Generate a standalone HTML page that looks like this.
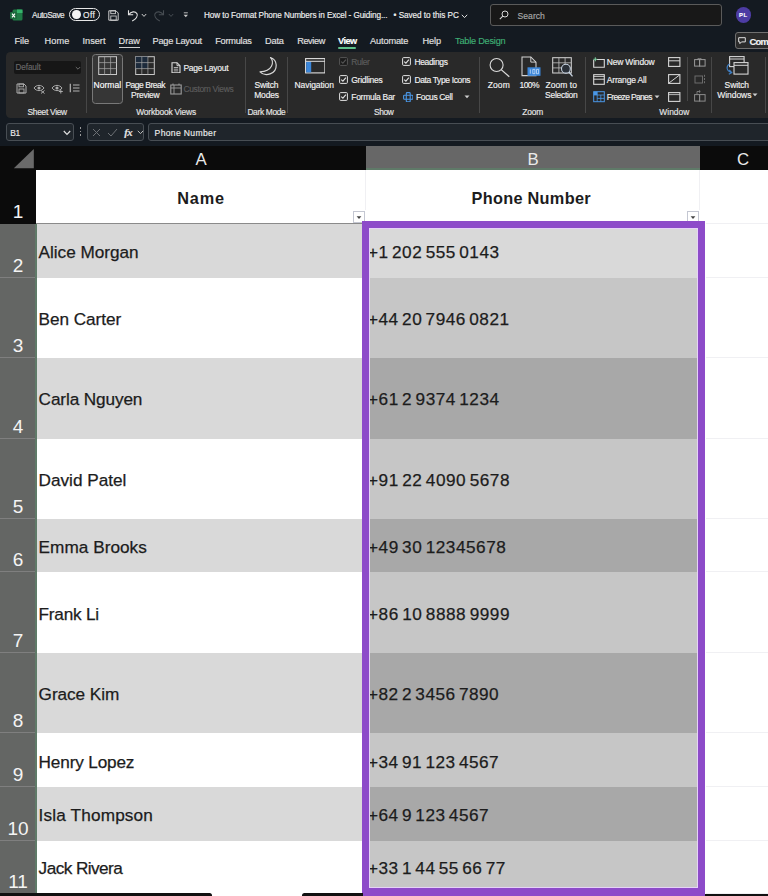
<!DOCTYPE html>
<html><head><meta charset="utf-8">
<style>
*{margin:0;padding:0;box-sizing:border-box}
html,body{width:768px;height:896px;overflow:hidden;background:#141a21;font-family:"Liberation Sans",sans-serif;}
.a{position:absolute}
.t{position:absolute;white-space:nowrap;color:#e8e8e8;font-size:8.6px;line-height:10px;letter-spacing:-0.1px;-webkit-text-stroke:0.15px currentColor}
.c{text-align:center}
.dim{color:#6f6f6f}
#sheet .cell{position:absolute;white-space:nowrap;color:#1c1c1c;font-size:17.2px;line-height:20px;-webkit-text-stroke:0.25px #1c1c1c}
#sheet .cell.hd{font-weight:bold;text-align:center;font-size:16.3px;letter-spacing:0.35px;-webkit-text-stroke:0}
#sheet .rn{position:absolute;color:#f4f4f4;font-size:19px;line-height:22px;width:36px;text-align:center;left:0}
#sheet .colh{color:#eaeaea;font-size:16.8px;line-height:20px;text-align:center}
</style></head><body>
<div class="a" style="left:0px;top:0px;width:768px;height:51px;background:#141a21;"></div>
<svg class="a" style="left:10px;top:9px;" width="13" height="12" viewBox="0 0 13 12"><rect x="2.5" y="0.5" width="10" height="11" rx="1.5" fill="#1f7a45"/><rect x="7" y="0.5" width="5.500" height="3.500" fill="#35b36b"/><rect x="0" y="3" width="7" height="7" rx="1" fill="#1a6a3c"/><path d="M2 4.600 L5 8.400 M5 4.600 L2 8.400" stroke="#fff" stroke-width="1.100"/></svg>
<div class="a" style="left:69px;top:7.800px;width:30.500px;height:13.200px;border:1.100px solid #e8e8e8;border-radius:7px"></div>
<div class="a" style="left:71.800px;top:10px;width:8.800px;height:8.800px;border-radius:50%;background:#f2f2f2"></div>
<svg class="a" style="left:108px;top:9.7px;" width="11" height="11" viewBox="0 0 11 11"><path d="M0.800 0.800 H8 L10.200 3 V10.200 H0.800 Z" fill="none" stroke="#d6d6d6" stroke-width="0.950"/><rect x="2.800" y="0.800" width="4.600" height="2.900" fill="none" stroke="#d6d6d6" stroke-width="0.850"/><rect x="2.800" y="6" width="5.400" height="4.200" fill="none" stroke="#d6d6d6" stroke-width="0.850"/></svg>
<svg class="a" style="left:127px;top:9px;" width="12" height="13" viewBox="0 0 12 13"><path d="M1.500 1.200 V5.800 H6.200" fill="none" stroke="#e4e4e4" stroke-width="1.100"/><path d="M1.800 5.600 C4 2.300 8.200 2 9.900 4.600 C11.400 7.200 9 10 5.200 12" fill="none" stroke="#e4e4e4" stroke-width="1.100"/></svg>
<svg class="a" style="left:141px;top:13px;" width="6" height="5" viewBox="0 0 6 5"><path d="M0.800 1 L3 3.400 L5.200 1" fill="none" stroke="#cfcfcf" stroke-width="1"/></svg>
<svg class="a" style="left:153px;top:9px;" width="12" height="13" viewBox="0 0 12 13"><path d="M10.500 1.200 V5.800 H5.800" fill="none" stroke="#474d53" stroke-width="1.100"/><path d="M10.200 5.600 C8 2.300 3.800 2 2.100 4.600 C0.600 7.200 3 10 6.800 12" fill="none" stroke="#474d53" stroke-width="1.100"/></svg>
<svg class="a" style="left:168px;top:13px;" width="6" height="5" viewBox="0 0 6 5"><path d="M0.800 1 L3 3.400 L5.200 1" fill="none" stroke="#474d53" stroke-width="1"/></svg>
<svg class="a" style="left:182.5px;top:11.5px;" width="6" height="7" viewBox="0 0 6 7"><path d="M0.800 0.800 H4.800" stroke="#c8c8c8" stroke-width="0.900"/><path d="M0.600 2.800 L2.800 5.200 L5 2.800 Z" fill="#c8c8c8"/></svg>
<svg class="a" style="left:461px;top:13.5px;" width="7" height="5" viewBox="0 0 7 5"><path d="M0.800 0.800 L3.500 3.600 L6.200 0.800" fill="none" stroke="#e0e0e0" stroke-width="1"/></svg>
<div class="a" style="left:490px;top:4px;width:231.500px;height:21.500px;background:#181818;border:1px solid #5a5a5a;border-radius:3px"></div>
<svg class="a" style="left:499px;top:9.5px;" width="10" height="10" viewBox="0 0 10 10"><circle cx="6" cy="4" r="3" fill="none" stroke="#d8d8d8" stroke-width="1"/><path d="M3.800 6.200 L0.800 9.200" stroke="#d8d8d8" stroke-width="1.100"/></svg>
<div class="a" style="left:735.500px;top:7.300px;width:15.500px;height:15.500px;border-radius:50%;background:#4d3ca3"></div>
<div class="a" style="left:119px;top:47.2px;width:20.5px;height:1px;background:#d0d0d0;"></div>
<div class="a" style="left:338.4px;top:46.9px;width:18px;height:2px;background:#5fc08a;border-radius:1px"></div>
<div class="a" style="left:734.700px;top:32.300px;width:40px;height:16.400px;background:#2b2b2b;border:1px solid #707070;border-radius:3px"></div>
<svg class="a" style="left:738.3px;top:37px;" width="8" height="7.5" viewBox="0 0 8 7.5"><path d="M0.700 0.700 H7.300 V4.900 H3.500 L1.900 6.600 V4.900 H0.700 Z" fill="none" stroke="#e0e0e0" stroke-width="1"/></svg>
<div class="a" style="left:5.500px;top:51.500px;width:780px;height:66.500px;background:#292929;border-radius:4.500px"></div>
<div class="a" style="left:86.2px;top:57px;width:1px;height:56px;background:#474747;"></div>
<div class="a" style="left:245.0px;top:57px;width:1px;height:56px;background:#474747;"></div>
<div class="a" style="left:287.2px;top:57px;width:1px;height:56px;background:#474747;"></div>
<div class="a" style="left:479.2px;top:57px;width:1px;height:56px;background:#474747;"></div>
<div class="a" style="left:584.9px;top:57px;width:1px;height:56px;background:#474747;"></div>
<div class="a" style="left:710.7px;top:57px;width:1px;height:56px;background:#474747;"></div>
<div class="a" style="left:686.8px;top:57px;width:1px;height:44px;background:#474747;"></div>
<div class="a" style="left:764.5px;top:57px;width:1px;height:56px;background:#474747;"></div>
<div class="a" style="left:14.300px;top:60.600px;width:66.400px;height:13.600px;background:#161616;border-radius:2px"></div>
<svg class="a" style="left:74.5px;top:65.5px;" width="6" height="5" viewBox="0 0 6 5"><path d="M0.800 1 L3 3.200 L5.200 1" fill="none" stroke="#6a6a6a" stroke-width="1"/></svg>
<svg class="a" style="left:15.5px;top:82.5px;" width="11" height="11" viewBox="0 0 11 11"><path d="M1 1 H8 L10 3 V10 H1 Z" fill="none" stroke="#adadad" stroke-width="1"/><rect x="3" y="1" width="4.500" height="2.800" fill="none" stroke="#adadad" stroke-width="0.900"/><rect x="3" y="6" width="5" height="4" fill="none" stroke="#adadad" stroke-width="0.900"/></svg>
<svg class="a" style="left:33px;top:83px;" width="13" height="11" viewBox="0 0 13 11"><path d="M1 5 C3.500 1.500 8.500 1.500 11 5 C8.500 8.500 3.500 8.500 1 5 Z" fill="none" stroke="#adadad" stroke-width="1"/><circle cx="6" cy="5" r="1.600" fill="#adadad"/><path d="M8 7.500 L11.500 10.500 M11.500 7.500 L8 10.500" stroke="#adadad" stroke-width="1"/></svg>
<svg class="a" style="left:50.5px;top:83px;" width="13" height="11" viewBox="0 0 13 11"><path d="M1 5 C3.500 1.500 8.500 1.500 11 5 C8.500 8.500 3.500 8.500 1 5 Z" fill="none" stroke="#adadad" stroke-width="1"/><circle cx="6" cy="5" r="1.600" fill="#adadad"/><path d="M9.800 6.500 V10.500 M7.800 8.500 H11.800" stroke="#adadad" stroke-width="1"/></svg>
<svg class="a" style="left:68.5px;top:83px;" width="11" height="10" viewBox="0 0 11 10"><path d="M4 2 H10.500 M4 5 H10.500 M4 8 H10.500" stroke="#b4b4b4" stroke-width="1.100"/><path d="M1.300 0.800 V9.200" stroke="#b4b4b4" stroke-width="1.200" /></svg>
<div class="a" style="left:92.200px;top:53.600px;width:30.700px;height:50.600px;background:#363636;border:1px solid #787878;border-radius:3.500px"></div>
<svg class="a" style="left:97.5px;top:56.3px;" width="20" height="19.5" viewBox="0 0 20 19.5"><rect x="0.700" y="0.700" width="17.800" height="17.800" fill="none" stroke="#c8c8c8" stroke-width="1"/><path d="M6.600 0.700 V18.500 M12.600 0.700 V18.500 M0.700 6.600 H18.500 M0.700 12.600 H18.500" stroke="#a8a8a8" stroke-width="0.700"/></svg>
<svg class="a" style="left:135px;top:56.3px;" width="20" height="19.5" viewBox="0 0 20 19.5"><rect x="0.700" y="0.700" width="18.600" height="17.800" fill="none" stroke="#c8c8c8" stroke-width="1"/><path d="M0.700 0.700 H12.900 V12.600 H0.700 Z" fill="#1d2b3c"/><path d="M6.800 0.700 V18.500 M12.900 0.700 V18.500 M0.700 6.600 H19.300 M0.700 12.600 H19.300" stroke="#a8a8a8" stroke-width="0.700"/></svg>
<svg class="a" style="left:170.5px;top:61.5px;" width="10" height="11.5" viewBox="0 0 10 11.5"><path d="M1 0.700 H6 L9 3.700 V10.800 H1 Z" fill="none" stroke="#dcdcdc" stroke-width="1.100"/><path d="M6 0.700 V3.700 H9" fill="none" stroke="#dcdcdc" stroke-width="0.900"/><path d="M2.800 5.500 H7.200 M2.800 7.200 H7.200 M2.800 8.900 H7.200" stroke="#cfcfcf" stroke-width="0.800"/></svg>
<svg class="a" style="left:170px;top:83px;" width="12" height="12" viewBox="0 0 12 12"><rect x="0.800" y="2" width="10.400" height="9" fill="none" stroke="#9c9c9c" stroke-width="1.100"/><path d="M0.800 5 H11.200 M4 2 V11" stroke="#9c9c9c" stroke-width="0.900"/><path d="M3 0.500 V2 M9 0.500 V2" stroke="#9c9c9c" stroke-width="1"/></svg>
<svg class="a" style="left:257px;top:56px;" width="21" height="21" viewBox="0 0 21 21"><path d="M13.500 1.500 C17.500 6 15.500 15.500 3 15.800 C8 21 19.500 18.500 19.200 9 C19 5.500 16.500 2.500 13.500 1.500 Z" fill="none" stroke="#dadada" stroke-width="1.150" stroke-linejoin="round"/></svg>
<svg class="a" style="left:304.5px;top:58.3px;" width="20.5" height="15.5" viewBox="0 0 20.5 15.5"><rect x="0.600" y="0.600" width="19.300" height="14.300" fill="none" stroke="#e0e0e0" stroke-width="1.100"/><rect x="1.200" y="3.600" width="5" height="10.800" fill="#3b86d9"/><path d="M0.600 3.300 H19.900" stroke="#e0e0e0" stroke-width="1"/></svg>
<svg class="a" style="left:339px;top:56.9px;" width="9" height="9" viewBox="0 0 9 9"><rect x="0.600" y="0.600" width="7.800" height="7.800" rx="1" fill="#1b1b1b" stroke="#555555" stroke-width="1"/><path d="M2.200 4.600 L3.900 6.200 L6.900 2.600" fill="none" stroke="#555555" stroke-width="1.100"/></svg>
<svg class="a" style="left:339px;top:74.8px;" width="9" height="9" viewBox="0 0 9 9"><rect x="0.600" y="0.600" width="7.800" height="7.800" rx="1" fill="none" stroke="#e2e2e2" stroke-width="1"/><path d="M2.200 4.600 L3.900 6.200 L6.900 2.600" fill="none" stroke="#e2e2e2" stroke-width="1.100"/></svg>
<svg class="a" style="left:339px;top:92.1px;" width="9" height="9" viewBox="0 0 9 9"><rect x="0.600" y="0.600" width="7.800" height="7.800" rx="1" fill="none" stroke="#e2e2e2" stroke-width="1"/><path d="M2.200 4.600 L3.900 6.200 L6.900 2.600" fill="none" stroke="#e2e2e2" stroke-width="1.100"/></svg>
<svg class="a" style="left:402px;top:56.9px;" width="9" height="9" viewBox="0 0 9 9"><rect x="0.600" y="0.600" width="7.800" height="7.800" rx="1" fill="none" stroke="#e2e2e2" stroke-width="1"/><path d="M2.200 4.600 L3.900 6.200 L6.900 2.600" fill="none" stroke="#e2e2e2" stroke-width="1.100"/></svg>
<svg class="a" style="left:402px;top:74.8px;" width="9" height="9" viewBox="0 0 9 9"><rect x="0.600" y="0.600" width="7.800" height="7.800" rx="1" fill="none" stroke="#e2e2e2" stroke-width="1"/><path d="M2.200 4.600 L3.900 6.200 L6.900 2.600" fill="none" stroke="#e2e2e2" stroke-width="1.100"/></svg>
<svg class="a" style="left:402.5px;top:91.5px;" width="10.5" height="10.5" viewBox="0 0 10.5 10.5"><rect x="3.300" y="0.600" width="3.900" height="9.300" rx="0.800" fill="none" stroke="#4a97e6" stroke-width="1.100"/><rect x="0.600" y="3.300" width="9.300" height="3.900" rx="0.800" fill="none" stroke="#4a97e6" stroke-width="1.100"/></svg>
<svg class="a" style="left:463.5px;top:95px;" width="6" height="4" viewBox="0 0 6 4"><path d="M0.500 0.500 H5.500 L3 3.300 Z" fill="#cfcfcf"/></svg>
<svg class="a" style="left:488.5px;top:56.5px;" width="22" height="21" viewBox="0 0 22 21"><circle cx="7.600" cy="8" r="6.500" fill="none" stroke="#dadada" stroke-width="1.100"/><path d="M12.200 12.600 L20.300 19.800" stroke="#dadada" stroke-width="1.250"/></svg>
<svg class="a" style="left:520.5px;top:56.3px;" width="20" height="21" viewBox="0 0 20 21"><path d="M1 0.900 H9.800 L15 6.100 V19.600 H1 Z" fill="none" stroke="#d4d4d4" stroke-width="1.050"/><path d="M9.800 0.900 V6.100 H15" fill="none" stroke="#d4d4d4" stroke-width="0.950"/><rect x="6.500" y="11.300" width="13" height="8.500" fill="#3b86d9"/><path d="M9.300 13.400 V17.700 M11.800 13.400 h2.100 v4.300 h-2.100 z M15.500 13.400 h2.100 v4.300 h-2.100 z" stroke="#dcebfc" stroke-width="0.700" fill="none"/></svg>
<svg class="a" style="left:551.5px;top:56.3px;" width="21" height="21" viewBox="0 0 21 21"><rect x="0.700" y="1.700" width="18.600" height="15.300" fill="none" stroke="#d0d0d0" stroke-width="1.050"/><path d="M6.900 1.700 V17 M13.100 1.700 V17 M0.700 6.800 H19.300 M0.700 11.900 H19.300" stroke="#b8b8b8" stroke-width="0.850"/><circle cx="13.900" cy="12.700" r="4.400" fill="#2a3038" stroke="#c8d4e2" stroke-width="1.050"/><path d="M17 16 L20.500 20.400" stroke="#c8d4e2" stroke-width="1.250"/></svg>
<svg class="a" style="left:592.5px;top:56.5px;" width="12" height="11" viewBox="0 0 12 11"><path d="M0.700 3 V10.300 H11.300 V2.500 H4" fill="none" stroke="#dadada" stroke-width="1.100"/><path d="M2.300 0.300 V4.300 M0.300 2.300 H4.300" stroke="#7ed0a0" stroke-width="1"/></svg>
<svg class="a" style="left:592.5px;top:73.5px;" width="12" height="11" viewBox="0 0 12 11"><rect x="0.700" y="0.700" width="10.600" height="9.600" fill="none" stroke="#dadada" stroke-width="1.100"/><path d="M0.700 5.200 H11.300" stroke="#dadada" stroke-width="1"/><path d="M0.700 2.500 H11.300" stroke="#dadada" stroke-width="0.800"/></svg>
<svg class="a" style="left:592.5px;top:91px;" width="12" height="11.5" viewBox="0 0 12 11.5"><rect x="0.700" y="0.700" width="10.600" height="10" fill="none" stroke="#4a97e6" stroke-width="1"/><path d="M4.200 0.700 V10.700 M7.800 4 V10.700 M0.700 4 H11.300 M4.200 7.400 H11.300" stroke="#4a97e6" stroke-width="0.800"/><rect x="0.700" y="0.700" width="3.500" height="3.300" fill="#4a97e6"/></svg>
<svg class="a" style="left:653.5px;top:95px;" width="6" height="4" viewBox="0 0 6 4"><path d="M0.500 0.500 H5.500 L3 3.300 Z" fill="#cfcfcf"/></svg>
<svg class="a" style="left:668.2px;top:57.3px;" width="12.5" height="10" viewBox="0 0 12.5 10"><rect x="0.600" y="0.600" width="11.300" height="8.800" fill="none" stroke="#d6d6d6" stroke-width="1.100"/><path d="M0.600 3.800 H11.900" stroke="#d6d6d6" stroke-width="1"/></svg>
<svg class="a" style="left:668.2px;top:74px;" width="12.5" height="10" viewBox="0 0 12.5 10"><rect x="0.600" y="0.600" width="11.300" height="8.800" fill="none" stroke="#d6d6d6" stroke-width="1.100"/><path d="M1 9 L11.500 1" stroke="#d6d6d6" stroke-width="1"/></svg>
<svg class="a" style="left:668.2px;top:91.5px;" width="12.5" height="10" viewBox="0 0 12.5 10"><rect x="0.600" y="0.600" width="11.300" height="8.800" fill="none" stroke="#d6d6d6" stroke-width="1.100"/><path d="M0.600 2.600 H11.900" stroke="#d6d6d6" stroke-width="0.800"/></svg>
<svg class="a" style="left:693.5px;top:58px;" width="12" height="9" viewBox="0 0 12 9"><rect x="0.600" y="1.600" width="5" height="6.500" fill="none" stroke="#9a9a9a" stroke-width="1"/><rect x="5.600" y="1.600" width="5.500" height="6.500" fill="none" stroke="#9a9a9a" stroke-width="1"/><path d="M3 1.600 C4 0 7 0 8 1.600" fill="none" stroke="#9a9a9a" stroke-width="0.800"/></svg>
<svg class="a" style="left:693.5px;top:73.5px;" width="12" height="11" viewBox="0 0 12 11"><rect x="1" y="2" width="7.500" height="7" fill="none" stroke="#6c6c6c" stroke-width="1"/><path d="M10.500 0.800 V10.200" stroke="#6c6c6c" stroke-width="1" stroke-dasharray="2 1.200"/></svg>
<svg class="a" style="left:693.5px;top:90px;" width="12" height="12" viewBox="0 0 12 12"><rect x="0.600" y="4.600" width="5" height="6.500" fill="none" stroke="#8a8a8a" stroke-width="1"/><rect x="5.600" y="4.600" width="5.500" height="6.500" fill="none" stroke="#8a8a8a" stroke-width="1"/><path d="M3 4 V1.500 H6 M5 0.300 L6.300 1.500 L5 2.700" fill="none" stroke="#8a8a8a" stroke-width="0.800"/></svg>
<svg class="a" style="left:724.5px;top:56px;" width="24" height="21" viewBox="0 0 24 21"><rect x="4.600" y="0.600" width="14.500" height="10" fill="#292929" stroke="#d6d6d6" stroke-width="1.100"/><path d="M4.600 3 H19.100" stroke="#d6d6d6" stroke-width="1"/><rect x="9" y="6.600" width="14" height="11.500" fill="#292929" stroke="#d6d6d6" stroke-width="1.100"/><path d="M9 9.300 H23" stroke="#d6d6d6" stroke-width="1"/><path d="M4.500 8 C1 10 1 15 6.500 16.500 M4.300 13.800 L6.800 16.600 L3.800 18.300" fill="none" stroke="#3f7fc4" stroke-width="1.100"/></svg>
<svg class="a" style="left:752px;top:93px;" width="6" height="4" viewBox="0 0 6 4"><path d="M0.500 0.500 H5.500 L3 3.300 Z" fill="#cfcfcf"/></svg>
<div class="a" style="left:0px;top:118px;width:768px;height:28px;background:#141a21;"></div>
<div class="a" style="left:5.700px;top:123.200px;width:68px;height:17.600px;background:#1f252b;border:1px solid #484e54;border-radius:3px"></div>
<svg class="a" style="left:62.5px;top:129.5px;" width="8" height="6" viewBox="0 0 8 6"><path d="M0.800 1 L4 4.300 L7.200 1" fill="none" stroke="#e0e0e0" stroke-width="1.200"/></svg>
<div class="a" style="left:79.9px;top:127.3px;width:1.3px;height:1.5px;background:#9a9a9a;"></div>
<div class="a" style="left:79.9px;top:130.8px;width:1.3px;height:1.5px;background:#9a9a9a;"></div>
<div class="a" style="left:79.9px;top:134.3px;width:1.3px;height:1.5px;background:#9a9a9a;"></div>
<div class="a" style="left:87.200px;top:123.200px;width:57.300px;height:17.600px;background:#1f252b;border:1px solid #484e54;border-radius:3px"></div>
<svg class="a" style="left:91.5px;top:127.5px;" width="9" height="9" viewBox="0 0 9 9"><path d="M1 1 L8 8 M8 1 L1 8" stroke="#6d7175" stroke-width="1"/></svg>
<svg class="a" style="left:107px;top:127.5px;" width="11" height="9" viewBox="0 0 11 9"><path d="M1 5 L4 8 L10 1" fill="none" stroke="#6d7175" stroke-width="1"/></svg>
<div class="t" style="left:124.2px;top:125.800px;font-family:'Liberation Serif',serif;font-style:italic;font-weight:bold;font-size:10.800px;line-height:13px;color:#e4e4e4;letter-spacing:-0.500px">fx</div>
<svg class="a" style="left:136.5px;top:129.5px;" width="7" height="5" viewBox="0 0 7 5"><path d="M0.800 0.800 L3.500 3.600 L6.200 0.800" fill="none" stroke="#bdbdbd" stroke-width="1"/></svg>
<div class="a" style="left:148px;top:123.200px;width:640px;height:17.600px;background:#1f252b;border:1px solid #484e54;border-radius:3px"></div>
<div class="t" style="left:32.09px;top:10.72px;font-size:8.3px;line-height:9.96px;color:#e9e9e9;font-weight:normal;letter-spacing:-0.482px">AutoSave</div>
<div class="t" style="left:83.08px;top:10.72px;font-size:8.3px;line-height:9.96px;color:#f0f0f0;font-weight:normal;letter-spacing:0.469px">Off</div>
<div class="t" style="left:203.99px;top:11.18px;font-size:8.2px;line-height:9.84px;color:#f0f0f0;font-weight:normal;letter-spacing:-0.101px">How to Format Phone Numbers in Excel - Guiding...</div>
<div class="t" style="left:393.59px;top:11.18px;font-size:8.2px;line-height:9.84px;color:#f0f0f0;font-weight:normal;letter-spacing:-0.045px">• Saved to this PC</div>
<div class="t" style="left:517.57px;top:10.54px;font-size:8.6px;line-height:10.32px;color:#a8a8a8;font-weight:normal;letter-spacing:0.021px">Search</div>
<div class="t" style="left:739.01px;top:12.22px;font-size:5.8px;line-height:6.96px;color:#ffffff;font-weight:bold;letter-spacing:0.529px">PL</div>
<div class="t" style="left:14.54px;top:36.18px;font-size:9.2px;line-height:11.04px;color:#e2e2e2;font-weight:normal;letter-spacing:-0.098px">File</div>
<div class="t" style="left:44.54px;top:36.18px;font-size:9.2px;line-height:11.04px;color:#e2e2e2;font-weight:normal;letter-spacing:0.101px">Home</div>
<div class="t" style="left:82.54px;top:36.18px;font-size:9.2px;line-height:11.04px;color:#e2e2e2;font-weight:normal;letter-spacing:-0.011px">Insert</div>
<div class="t" style="left:118.54px;top:36.18px;font-size:9.2px;line-height:11.04px;color:#e2e2e2;font-weight:normal;letter-spacing:-0.008px">Draw</div>
<div class="t" style="left:152.54px;top:36.18px;font-size:9.2px;line-height:11.04px;color:#e2e2e2;font-weight:normal;letter-spacing:-0.199px">Page Layout</div>
<div class="t" style="left:215.24px;top:36.18px;font-size:9.2px;line-height:11.04px;color:#e2e2e2;font-weight:normal;letter-spacing:-0.235px">Formulas</div>
<div class="t" style="left:265.04px;top:36.18px;font-size:9.2px;line-height:11.04px;color:#e2e2e2;font-weight:normal;letter-spacing:-0.175px">Data</div>
<div class="t" style="left:297.14px;top:36.18px;font-size:9.2px;line-height:11.04px;color:#e2e2e2;font-weight:normal;letter-spacing:-0.384px">Review</div>
<div class="t" style="left:337.94px;top:36.18px;font-size:9.2px;line-height:11.04px;color:#ffffff;font-weight:bold;letter-spacing:-0.515px">View</div>
<div class="t" style="left:370.04px;top:36.18px;font-size:9.2px;line-height:11.04px;color:#e2e2e2;font-weight:normal;letter-spacing:-0.139px">Automate</div>
<div class="t" style="left:422.54px;top:36.18px;font-size:9.2px;line-height:11.04px;color:#e2e2e2;font-weight:normal;letter-spacing:-0.147px">Help</div>
<div class="t" style="left:455.04px;top:36.18px;font-size:9.2px;line-height:11.04px;color:#3fae74;font-weight:normal;letter-spacing:-0.225px">Table Design</div>
<div class="t" style="left:749.53px;top:35.66px;font-size:9.4px;line-height:11.28px;color:#f4f4f4;font-weight:bold;letter-spacing:-0.768px">Com</div>
<div class="t" style="left:27.58px;top:106.76px;font-size:8.4px;line-height:10.08px;color:#e6e6e6;font-weight:normal;letter-spacing:-0.298px">Sheet View</div>
<div class="t" style="left:136.28px;top:106.76px;font-size:8.4px;line-height:10.08px;color:#e6e6e6;font-weight:normal;letter-spacing:-0.174px">Workbook Views</div>
<div class="t" style="left:247.38px;top:106.76px;font-size:8.4px;line-height:10.08px;color:#e6e6e6;font-weight:normal;letter-spacing:-0.325px">Dark Mode</div>
<div class="t" style="left:373.98px;top:106.76px;font-size:8.4px;line-height:10.08px;color:#e6e6e6;font-weight:normal;letter-spacing:-0.378px">Show</div>
<div class="t" style="left:522.28px;top:106.76px;font-size:8.4px;line-height:10.08px;color:#e6e6e6;font-weight:normal;letter-spacing:-0.120px">Zoom</div>
<div class="t" style="left:659.28px;top:106.76px;font-size:8.4px;line-height:10.08px;color:#e6e6e6;font-weight:normal;letter-spacing:0.057px">Window</div>
<div class="t" style="left:15.39px;top:62.88px;font-size:8.2px;line-height:9.84px;color:#686868;font-weight:normal;letter-spacing:-0.076px">Default</div>
<div class="t" style="left:93.48px;top:80.20px;font-size:8.5px;line-height:10.20px;color:#ffffff;font-weight:normal;letter-spacing:0.057px">Normal</div>
<div class="t" style="left:125.38px;top:80.20px;font-size:8.5px;line-height:10.20px;color:#f2f2f2;font-weight:normal;letter-spacing:-0.477px">Page Break</div>
<div class="t" style="left:131.07px;top:90.00px;font-size:8.5px;line-height:10.20px;color:#f2f2f2;font-weight:normal;letter-spacing:-0.283px">Preview</div>
<div class="t" style="left:183.38px;top:63.10px;font-size:8.5px;line-height:10.20px;color:#f2f2f2;font-weight:normal;letter-spacing:-0.262px">Page Layout</div>
<div class="t" style="left:183.38px;top:84.20px;font-size:8.5px;line-height:10.20px;color:#5c5c5c;font-weight:normal;letter-spacing:-0.343px">Custom Views</div>
<div class="t" style="left:254.57px;top:80.20px;font-size:8.5px;line-height:10.20px;color:#f2f2f2;font-weight:normal;letter-spacing:-0.233px">Switch</div>
<div class="t" style="left:254.17px;top:90.00px;font-size:8.5px;line-height:10.20px;color:#f2f2f2;font-weight:normal;letter-spacing:-0.153px">Modes</div>
<div class="t" style="left:294.57px;top:80.20px;font-size:8.5px;line-height:10.20px;color:#f2f2f2;font-weight:normal;letter-spacing:-0.092px">Navigation</div>
<div class="t" style="left:351.27px;top:56.80px;font-size:8.5px;line-height:10.20px;color:#5c5c5c;font-weight:normal;letter-spacing:-0.432px">Ruler</div>
<div class="t" style="left:351.27px;top:75.20px;font-size:8.5px;line-height:10.20px;color:#f2f2f2;font-weight:normal;letter-spacing:-0.266px">Gridlines</div>
<div class="t" style="left:351.27px;top:91.90px;font-size:8.5px;line-height:10.20px;color:#f2f2f2;font-weight:normal;letter-spacing:-0.283px">Formula Bar</div>
<div class="t" style="left:414.38px;top:56.80px;font-size:8.5px;line-height:10.20px;color:#f2f2f2;font-weight:normal;letter-spacing:-0.334px">Headings</div>
<div class="t" style="left:414.38px;top:75.20px;font-size:8.5px;line-height:10.20px;color:#f2f2f2;font-weight:normal;letter-spacing:-0.362px">Data Type Icons</div>
<div class="t" style="left:416.07px;top:91.90px;font-size:8.5px;line-height:10.20px;color:#f2f2f2;font-weight:normal;letter-spacing:-0.381px">Focus Cell</div>
<div class="t" style="left:487.77px;top:80.20px;font-size:8.5px;line-height:10.20px;color:#f2f2f2;font-weight:normal;letter-spacing:0.079px">Zoom</div>
<div class="t" style="left:519.58px;top:80.20px;font-size:8.5px;line-height:10.20px;color:#f2f2f2;font-weight:normal;letter-spacing:-0.625px">100%</div>
<div class="t" style="left:545.58px;top:80.20px;font-size:8.5px;line-height:10.20px;color:#f2f2f2;font-weight:normal;letter-spacing:0.038px">Zoom to</div>
<div class="t" style="left:545.08px;top:90.00px;font-size:8.5px;line-height:10.20px;color:#f2f2f2;font-weight:normal;letter-spacing:-0.291px">Selection</div>
<div class="t" style="left:606.78px;top:56.80px;font-size:8.5px;line-height:10.20px;color:#f2f2f2;font-weight:normal;letter-spacing:-0.196px">New Window</div>
<div class="t" style="left:606.78px;top:75.20px;font-size:8.5px;line-height:10.20px;color:#f2f2f2;font-weight:normal;letter-spacing:-0.177px">Arrange All</div>
<div class="t" style="left:606.78px;top:91.90px;font-size:8.5px;line-height:10.20px;color:#f2f2f2;font-weight:normal;letter-spacing:-0.664px">Freeze Panes</div>
<div class="t" style="left:724.58px;top:80.20px;font-size:8.5px;line-height:10.20px;color:#f2f2f2;font-weight:normal;letter-spacing:-0.116px">Switch</div>
<div class="t" style="left:717.28px;top:90.00px;font-size:8.5px;line-height:10.20px;color:#f2f2f2;font-weight:normal;letter-spacing:-0.048px">Windows</div>
<div class="t" style="left:10.18px;top:127.66px;font-size:8.4px;line-height:10.08px;color:#ececec;font-weight:normal;letter-spacing:-0.255px">B1</div>
<div class="t" style="left:154.57px;top:127.54px;font-size:8.6px;line-height:10.32px;color:#ececec;font-weight:normal;letter-spacing:0.337px">Phone Number</div>
<div id="sheet">
<div class="a" style="left:0;top:146px;width:768px;height:24px;background:#0b0b0b"></div>
<div class="a" style="left:366px;top:146px;width:334px;height:24px;background:#676767"></div>
<div class="a" style="left:366px;top:168px;width:334px;height:2px;background:#5f7a68"></div>
<svg class="a" style="left:0;top:146px" width="36" height="24"><path d="M13.8 22.3 L33.8 3 L33.8 22.3 Z" fill="#6a6a6a"/></svg>
<div class="a colh" style="left:36px;top:150.4px;width:330px">A</div>
<div class="a colh" style="left:366px;top:150.4px;width:334px">B</div>
<div class="a colh" style="left:700px;top:150.4px;width:86px">C</div>
<div class="a" style="left:36px;top:170px;width:732px;height:724px;background:#fff"></div>
<div class="a" style="left:0;top:170px;width:36px;height:54px;background:#0b0b0b"></div>
<div class="a" style="left:0;top:224px;width:36px;height:670px;background:#646664"></div>
<div class="a" style="left:35px;top:224px;width:2px;height:670px;background:#5f7a68"></div>
<div class="a" style="left:706px;top:223px;width:62px;height:1px;background:#f0f0f3"></div>
<div class="rn" style="top:201px">1</div>
<div class="cell hd" style="left:36px;width:330px;top:187.9px;letter-spacing:0.85px">Name</div>
<div class="cell hd" style="left:364.2px;width:334px;top:187.9px;letter-spacing:0.3px">Phone Number</div>
<div class="a" style="left:37px;top:224px;width:329px;height:53.75px;background:#d9d9d9"></div>
<div class="a" style="left:366px;top:224px;width:334px;height:53.75px;background:#d9d9d9"></div>
<div class="a" style="left:706px;top:276.75px;width:62px;height:1px;background:#f0f0f3"></div>
<div class="a" style="left:0;top:276.75px;width:35px;height:1px;background:#7f7f7f"></div>
<div class="rn" style="top:254.75px">2</div>
<div class="cell" style="left:38.6px;top:241.75px;letter-spacing:-0.030px">Alice Morgan</div>
<div class="cell" style="left:368.0px;top:241.75px;letter-spacing:0.516px;word-spacing:-1.9px">+1 202 555 0143</div>
<div class="a" style="left:366px;top:277.75px;width:334px;height:80.0px;background:#c6c6c6"></div>
<div class="a" style="left:706px;top:356.75px;width:62px;height:1px;background:#f0f0f3"></div>
<div class="a" style="left:0;top:356.75px;width:35px;height:1px;background:#7f7f7f"></div>
<div class="rn" style="top:334.75px">3</div>
<div class="cell" style="left:38.6px;top:309.25px;letter-spacing:-0.066px">Ben Carter</div>
<div class="cell" style="left:368.0px;top:309.25px;letter-spacing:0.511px;word-spacing:-1.9px">+44 20 7946 0821</div>
<div class="a" style="left:37px;top:357.75px;width:329px;height:80.75px;background:#d9d9d9"></div>
<div class="a" style="left:366px;top:357.75px;width:334px;height:80.75px;background:#a8a8a8"></div>
<div class="a" style="left:706px;top:437.5px;width:62px;height:1px;background:#f0f0f3"></div>
<div class="a" style="left:0;top:437.5px;width:35px;height:1px;background:#7f7f7f"></div>
<div class="rn" style="top:415.5px">4</div>
<div class="cell" style="left:38.6px;top:389.25px;letter-spacing:-0.116px">Carla Nguyen</div>
<div class="cell" style="left:368.0px;top:389.25px;letter-spacing:0.516px;word-spacing:-1.9px">+61 2 9374 1234</div>
<div class="a" style="left:366px;top:438.5px;width:334px;height:80.25px;background:#c6c6c6"></div>
<div class="a" style="left:706px;top:517.75px;width:62px;height:1px;background:#f0f0f3"></div>
<div class="a" style="left:0;top:517.75px;width:35px;height:1px;background:#7f7f7f"></div>
<div class="rn" style="top:495.75px">5</div>
<div class="cell" style="left:38.6px;top:469.75px;letter-spacing:-0.019px">David Patel</div>
<div class="cell" style="left:368.0px;top:469.75px;letter-spacing:0.542px;word-spacing:-1.9px">+91 22 4090 5678</div>
<div class="a" style="left:37px;top:518.75px;width:329px;height:53.25px;background:#d9d9d9"></div>
<div class="a" style="left:366px;top:518.75px;width:334px;height:53.25px;background:#a8a8a8"></div>
<div class="a" style="left:706px;top:571px;width:62px;height:1px;background:#f0f0f3"></div>
<div class="a" style="left:0;top:571px;width:35px;height:1px;background:#7f7f7f"></div>
<div class="rn" style="top:549px">6</div>
<div class="cell" style="left:38.6px;top:536.50px;letter-spacing:0.024px">Emma Brooks</div>
<div class="cell" style="left:368.0px;top:536.50px;letter-spacing:0.520px;word-spacing:-1.9px">+49 30 12345678</div>
<div class="a" style="left:366px;top:572px;width:334px;height:80.5px;background:#c6c6c6"></div>
<div class="a" style="left:706px;top:651.5px;width:62px;height:1px;background:#f0f0f3"></div>
<div class="a" style="left:0;top:651.5px;width:35px;height:1px;background:#7f7f7f"></div>
<div class="rn" style="top:629.5px">7</div>
<div class="cell" style="left:38.6px;top:603.50px;letter-spacing:-0.237px">Frank Li</div>
<div class="cell" style="left:368.0px;top:603.50px;letter-spacing:0.542px;word-spacing:-1.9px">+86 10 8888 9999</div>
<div class="a" style="left:37px;top:652.5px;width:329px;height:80.75px;background:#d9d9d9"></div>
<div class="a" style="left:366px;top:652.5px;width:334px;height:80.75px;background:#a8a8a8"></div>
<div class="a" style="left:706px;top:732.25px;width:62px;height:1px;background:#f0f0f3"></div>
<div class="a" style="left:0;top:732.25px;width:35px;height:1px;background:#7f7f7f"></div>
<div class="rn" style="top:710.25px">8</div>
<div class="cell" style="left:38.6px;top:683.50px;letter-spacing:-0.054px">Grace Kim</div>
<div class="cell" style="left:368.0px;top:683.50px;letter-spacing:0.483px;word-spacing:-1.9px">+82 2 3456 7890</div>
<div class="a" style="left:366px;top:733.25px;width:334px;height:53.75px;background:#c6c6c6"></div>
<div class="a" style="left:706px;top:786px;width:62px;height:1px;background:#f0f0f3"></div>
<div class="a" style="left:0;top:786px;width:35px;height:1px;background:#7f7f7f"></div>
<div class="rn" style="top:764px">9</div>
<div class="cell" style="left:38.6px;top:751.75px;letter-spacing:-0.159px">Henry Lopez</div>
<div class="cell" style="left:368.0px;top:751.75px;letter-spacing:0.483px;word-spacing:-1.9px">+34 91 123 4567</div>
<div class="a" style="left:37px;top:787px;width:329px;height:54.25px;background:#d9d9d9"></div>
<div class="a" style="left:366px;top:787px;width:334px;height:54.25px;background:#a8a8a8"></div>
<div class="a" style="left:706px;top:840.25px;width:62px;height:1px;background:#f0f0f3"></div>
<div class="a" style="left:0;top:840.25px;width:35px;height:1px;background:#7f7f7f"></div>
<div class="rn" style="top:818.25px">10</div>
<div class="cell" style="left:38.6px;top:805.25px;letter-spacing:0.156px">Isla Thompson</div>
<div class="cell" style="left:368.0px;top:805.25px;letter-spacing:0.485px;word-spacing:-1.9px">+64 9 123 4567</div>
<div class="a" style="left:366px;top:841.25px;width:334px;height:52.25px;background:#c6c6c6"></div>
<div class="a" style="left:706px;top:892.5px;width:62px;height:1px;background:#f0f0f3"></div>
<div class="a" style="left:0;top:892.5px;width:35px;height:1px;background:#7f7f7f"></div>
<div class="rn" style="top:870.5px">11</div>
<div class="cell" style="left:38.6px;top:858.00px;letter-spacing:-0.556px">Jack Rivera</div>
<div class="cell" style="left:368.0px;top:858.00px;letter-spacing:0.485px;word-spacing:-1.9px">+33 1 44 55 66 77</div>
<div class="a" style="left:36px;top:223px;width:330px;height:1px;background:#8a8a8a"></div>
<div class="a" style="left:365px;top:170px;width:1px;height:40px;background:#f0f0f3"></div>
<div class="a" style="left:699px;top:170px;width:1px;height:40px;background:#f0f0f3"></div>
<div class="a" style="left:353.3px;top:211px;width:12px;height:12px;background:#fff;border:1px solid #c4c7d2"></div>
<svg class="a" style="left:353.3px;top:211px" width="12" height="12"><path d="M3.6 5.2 L8.4 5.2 L6 8 Z" fill="#444"/></svg>
<div class="a" style="left:686.9px;top:211px;width:12px;height:12px;background:#fff;border:1px solid #c4c7d2"></div>
<svg class="a" style="left:686.9px;top:211px" width="12" height="12"><path d="M3.6 5.2 L8.4 5.2 L6 8 Z" fill="#444"/></svg>
<div class="a" style="left:362px;top:221px;width:343px;height:675px;border:7px solid #8d4bc9;border-bottom-width:8px;box-shadow:inset 0 0 0 1px #e6d3f7"></div>
<div class="a" style="left:36px;top:893px;width:326px;height:3px;background:#fff"></div>
<div class="a" style="left:0;top:893px;width:212px;height:4px;background:#111;border-radius:0 2.5px 0 0"></div>
<div class="a" style="left:302px;top:893px;width:61px;height:4px;background:#111;border-radius:2.5px 0 0 0"></div>
<div class="a" style="left:705px;top:893.5px;width:63px;height:3px;background:#111"></div>
</div>
</body></html>
